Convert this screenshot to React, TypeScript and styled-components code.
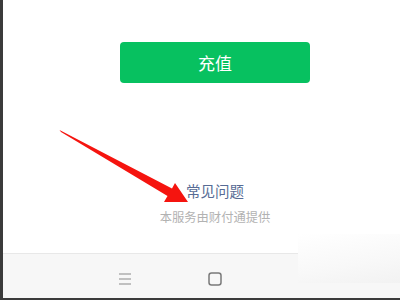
import React from 'react';
import styled, { createGlobalStyle } from 'styled-components';

const Global = createGlobalStyle`
  html, body { margin: 0; padding: 0; background: #3b3b3b; }
  body { font-family: "Noto Sans CJK SC", "Liberation Sans", sans-serif; }
`;

const Frame = styled.div`
  position: relative;
  width: 400px;
  height: 300px;
  overflow: hidden;
  background: #3b3b3b;
`;

const Screen = styled.div`
  width: 424px;
  height: 298px;
  border-left: 3px solid #3b3b3b;
  display: flex;
  flex-direction: column;
  background: #fff;
`;

const Body = styled.div`
  flex: 1;
  display: flex;
  flex-direction: column;
  align-items: center;
`;

const PayButton = styled.button`
  margin-top: 42px;
  width: 190px;
  height: 41px;
  border: none;
  border-radius: 4px;
  background: #07c160;
  color: #fff;
  font-family: inherit;
  font-size: 17px;
  line-height: 41px;
  padding: 0;
`;

const Faq = styled.a`
  margin-top: 98px;
  color: #576b95;
  font-size: 14.5px;
  line-height: 20px;
  text-decoration: none;
`;

const Provider = styled.div`
  margin-top: 8px;
  color: #b2b2b2;
  font-size: 12.3px;
  line-height: 16px;
`;

const NavBar = styled.div`
  height: 45px;
  border-top: 1px solid #e8e8e8;
  background: #f7f7f7;
  display: flex;
  justify-content: center;
  align-items: center;
  gap: 76px;
  padding-top: 5px;
  box-sizing: border-box;
`;

const NavIcon = styled.svg`
  width: 14px;
  height: 14px;
  display: block;
`;

const Watermark = styled.div`
  position: absolute;
  left: 298px;
  top: 234px;
  width: 102px;
  height: 49px;
  background: linear-gradient(170deg, #ffffff 0%, #f8f8f8 60%, #f2f2f2 100%);
`;

const Arrow = styled.svg`
  position: absolute;
  left: 0;
  top: 0;
  width: 400px;
  height: 300px;
  pointer-events: none;
`;

export default function App() {
  return (
    <Frame>
      <Global />
      <Screen>
        <Body>
          <PayButton>充值</PayButton>
          <Faq>常见问题</Faq>
          <Provider>本服务由财付通提供</Provider>
        </Body>
        <NavBar>
          <NavIcon viewBox="0 0 14 14">
            <path d="M1 2h12M1 7h12M1 12h12" stroke="#8a8a8a" strokeWidth="1.2" fill="none" />
          </NavIcon>
          <NavIcon viewBox="0 0 14 14">
            <rect x="1" y="1" width="12" height="12" rx="2.5" stroke="#7a7a7a" strokeWidth="1.5" fill="none" />
          </NavIcon>
          <NavIcon viewBox="0 0 14 14" />
        </NavBar>
      </Screen>
      <Watermark />
      <Arrow viewBox="0 0 400 300">
        <polygon
          points="59.5,130 61,132 167.5,196 164,202 188,202 175,183 172,188.5"
          fill="#f5140f"
        />
      </Arrow>
    </Frame>
  );
}
